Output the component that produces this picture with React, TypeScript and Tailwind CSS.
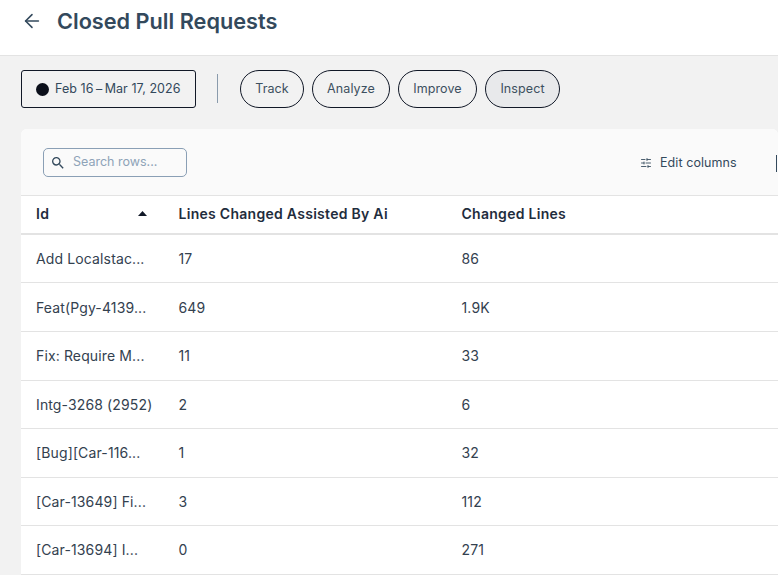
import { ArrowLeft, SlidersHorizontal } from "lucide-react";

const rows = [
  ["Add Localstac...", "17", "86"],
  ["Feat(Pgy-4139...", "649", "1.9K"],
  ["Fix: Require M...", "11", "33"],
  ["Intg-3268 (2952)", "2", "6"],
  ["[Bug][Car-116...", "1", "32"],
  ["[Car-13649] Fi...", "3", "112"],
  ["[Car-13694] I...", "0", "271"],
];

function Pill({ label, active, width }: { label: string; active?: boolean; width: string }) {
  return (
    <div
      className={`h-[38px] ${width} flex items-center justify-center rounded-[19px] border border-[#111827] text-[12.5px] tracking-[0.1px] text-[#3d5060] ${
        active ? "bg-[#e8e9eb]" : ""
      }`}
    >
      {label}
    </div>
  );
}

export default function App() {
  return (
    <div className="h-[575px] w-[778px] overflow-hidden bg-[#f2f2f2] font-['Inter',sans-serif]">
      <header className="h-[56px] bg-white border-b border-[#e3e3e3] flex items-center pl-[21px] pb-[13px]">
        <ArrowLeft size={22} strokeWidth={1.7} className="text-[#33495c]" />
        <h1 className="ml-[14px] text-[21.7px] leading-[28px] font-semibold text-[#33495c]">Closed Pull Requests</h1>
      </header>

      <div className="h-[73px] flex items-start pt-[14px] pl-[21px]">
        <div className="h-[38px] w-[175px] flex items-center pl-[14px] rounded-[3px] border border-[#111827] text-[12.5px] tracking-[0.07px] text-[#33495c]">
          <span className="h-[13px] w-[13px] rounded-full bg-[#0b0f1a] mr-[6px]" />
          <span>Feb 16{"\u2009–\u2009"}Mar 17, 2026</span>
        </div>
        <div className="ml-[21px] mr-[22px] mt-[4px] h-[29px] w-px bg-[#8a9bac]" />
        <div className="flex gap-[8px]">
          <Pill label="Track" width="w-[64px]" />
          <Pill label="Analyze" width="w-[78px]" />
          <Pill label="Improve" width="w-[79px]" />
          <Pill label="Inspect" width="w-[75px]" active />
        </div>
      </div>

      <div className="ml-[21px] rounded-t-[6px] bg-white overflow-hidden">
        <div className="h-[67px] bg-[#fafafa] border-b border-[#e3e3e3] flex items-center pl-[22px] pt-[2px]">
          <div className="h-[29px] w-[144px] mb-[2px] flex items-center pl-[6px] pt-[1px] rounded-[5px] border border-[#8a9fb5] bg-[#fafafa]">
            <svg width="16" height="16" viewBox="0 0 24 24" fill="#33495c">
              <path d="M15.5 14h-.79l-.28-.27A6.47 6.47 0 0 0 16 9.5 6.5 6.5 0 1 0 9.5 16c1.61 0 3.09-.59 4.23-1.57l.27.28v.79l5 4.99L20.49 19zm-6 0C7.01 14 5 11.99 5 9.5S7.01 5 9.5 5 14 7.01 14 9.5 11.99 14 9.5 14" />
            </svg>
            <span className="ml-[7px] text-[12.5px] text-[#8ea3b8]">Search rows...</span>
          </div>
          <div className="ml-[453px] flex items-center text-[12.5px] tracking-[0.08px] text-[#33495c]">
            <SlidersHorizontal size={12} strokeWidth={1.75} />
            <span className="ml-[8px]">Edit columns</span>
          </div>
          <div className="ml-[39px] h-[17px] w-px bg-[#33495c]" />
        </div>

        <div className="h-[38.9px] border-b-2 border-[#e3e3e3] flex items-center pb-[1px] text-[14px] tracking-[0.28px] font-semibold text-[#1f2d3d]">
          <div className="w-[157.5px] pl-[15px] flex items-center justify-between pr-[32px]">
            <span>Id</span>
            <svg width="9" height="5" viewBox="0 0 9 5"><path d="M4.5 0 9 5H0z" fill="#111827" /></svg>
          </div>
          <div className="w-[283px]">Lines Changed Assisted By Ai</div>
          <div>Changed Lines</div>
        </div>

        {rows.map((r) => (
          <div key={r[0]} className="h-[48.55px] border-b border-[#e3e3e3] flex items-center text-[14px] tracking-[0.13px] text-[#33414f]">
            <div className="w-[157.5px] pl-[15px] whitespace-nowrap overflow-hidden">{r[0]}</div>
            <div className="w-[283px]">{r[1]}</div>
            <div>{r[2]}</div>
          </div>
        ))}
      </div>
    </div>
  );
}
